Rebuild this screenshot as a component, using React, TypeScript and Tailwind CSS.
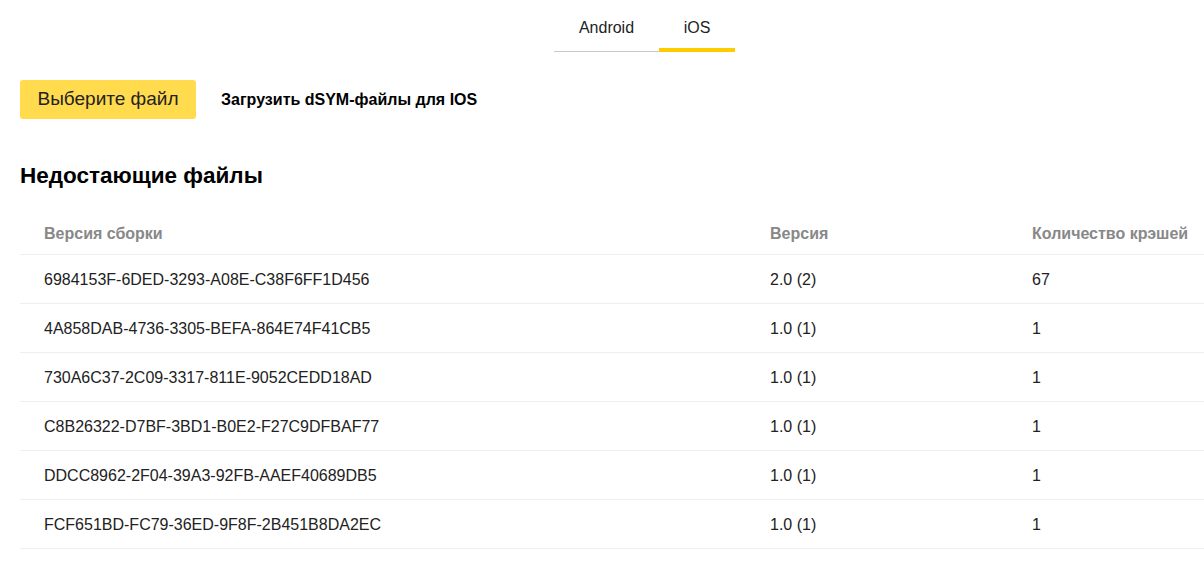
import React, { useState } from 'react';

const rows = [
  { build: '6984153F-6DED-3293-A08E-C38F6FF1D456', version: '2.0 (2)', crashes: '67' },
  { build: '4A858DAB-4736-3305-BEFA-864E74F41CB5', version: '1.0 (1)', crashes: '1' },
  { build: '730A6C37-2C09-3317-811E-9052CEDD18AD', version: '1.0 (1)', crashes: '1' },
  { build: 'C8B26322-D7BF-3BD1-B0E2-F27C9DFBAF77', version: '1.0 (1)', crashes: '1' },
  { build: 'DDCC8962-2F04-39A3-92FB-AAEF40689DB5', version: '1.0 (1)', crashes: '1' },
  { build: 'FCF651BD-FC79-36ED-9F8F-2B451B8DA2EC', version: '1.0 (1)', crashes: '1' },
];

export default function App() {
  const [tab, setTab] = useState<'android' | 'ios'>('ios');

  return (
    <div className="min-h-screen bg-white text-[#222] font-['Liberation_Sans',Arial,sans-serif]">
      {/* Platform tabs */}
      <div className="flex pl-[554px]">
        <div className="flex h-[52px]">
          <button
            onClick={() => setTab('android')}
            className={`flex items-start justify-center w-[105px] h-[52px] pt-[19px] text-[16px] leading-[18px] ${
              tab === 'android' ? 'border-b-4 border-[#fc0]' : 'border-b border-[#c8c8c8]'
            }`}
          >
            Android
          </button>
          <button
            onClick={() => setTab('ios')}
            className={`flex items-start justify-center w-[76px] h-[52px] pt-[19px] text-[16px] leading-[18px] ${
              tab === 'ios' ? 'border-b-4 border-[#fc0]' : 'border-b border-[#c8c8c8]'
            }`}
          >
            iOS
          </button>
        </div>
      </div>

      {/* Upload */}
      <div className="flex items-center gap-[25px] px-5 mt-[28px]">
        <button className="h-[39px] w-[176px] rounded-[3px] bg-[#ffdb4d] text-[19px] text-[#222]">
          Выберите файл
        </button>
        <span className="text-[16px] font-bold text-black">Загрузить dSYM-файлы для IOS</span>
      </div>

      <h2 className="px-5 mt-[44px] text-[22.5px] font-bold text-black leading-[26px]">Недостающие файлы</h2>

      {/* Table */}
      <div className="pl-5 mt-[21px]">
        <div className="flex h-[44px] items-center pt-[4px] text-[16px] font-bold text-[#888]">
          <div className="w-[726px] pl-6">Версия сборки</div>
          <div className="w-[262px] pl-6">Версия</div>
          <div className="flex-1 pl-6 whitespace-nowrap">Количество крэшей</div>
        </div>
        {rows.map((r) => (
          <div key={r.build} className="flex h-[49px] items-center pt-[2px] border-t border-[#eee] text-[16px] text-[#222]">
            <div className="w-[726px] pl-6">{r.build}</div>
            <div className="w-[262px] pl-6">{r.version}</div>
            <div className="flex-1 pl-6">{r.crashes}</div>
          </div>
        ))}
        <div className="border-t border-[#eee]" />
      </div>
    </div>
  );
}
